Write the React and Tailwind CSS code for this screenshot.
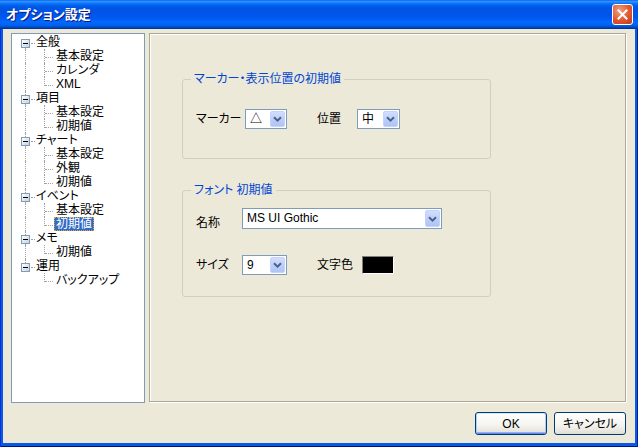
import React from "react";

const tree = [
  { label: "全般", children: ["基本設定", "カレンダ", "XML"] },
  { label: "項目", children: ["基本設定", "初期値"] },
  { label: "チャート", children: ["基本設定", "外観", "初期値"] },
  { label: "イベント", children: ["基本設定", "初期値"], selected: 1 },
  { label: "メモ", children: ["初期値"] },
  { label: "運用", children: ["バックアップ"] },
];

const dot = "absolute border-dotted border-[#a0a0a0]";

function Chevron() {
  return (
    <span className="flex h-full w-[15px] items-center justify-center rounded-[2px] border border-[#c3d3fd] bg-[linear-gradient(to_bottom,#d2defd,#b9cdf9_60%,#aec4f6)]">
      <svg width="9" height="6" viewBox="0 0 9 6">
        <path d="M1 1.2 L4.5 4.6 L8 1.2" fill="none" stroke="#4d6185" strokeWidth="2" />
      </svg>
    </span>
  );
}

function Combo({ value, size }) {
  return (
    <div className={`flex border border-[#7f9db9] bg-white p-[1px] ${size}`}>
      <span className="flex-1 pl-[3px] text-[12px] leading-[16px] text-black">{value}</span>
      <Chevron />
    </div>
  );
}

function Group({ title, size, children }) {
  return (
    <div className={`relative rounded-[3px] border border-[#d0d0bf] ${size}`}>
      <span className="absolute -top-[8px] left-[8px] bg-[#ece9d8] px-[3px] text-[12px] leading-[14px] text-[#0046d5]">
        {title}
      </span>
      {children}
    </div>
  );
}

function TreeRows() {
  const rows = [];
  tree.forEach((node, ri) => {
    const firstRoot = ri === 0;
    const lastRoot = ri === tree.length - 1;
    rows.push(
      <div key={`r${ri}`} className="relative flex h-[14px] items-center pl-[22px]">
        {!firstRoot && <span className={`${dot} left-[13px] top-0 h-[4px] border-l`} />}
        {!lastRoot && <span className={`${dot} left-[13px] top-[13px] h-[1px] border-l`} />}
        <span className="absolute left-[9px] top-[4px] flex h-[9px] w-[9px] items-center justify-center border border-[#7f9db9] bg-[linear-gradient(135deg,#ffffff,#c8d0dc)]">
          <span className="h-[1px] w-[5px] bg-black" />
        </span>
        <span className={`${dot} left-[19px] top-[8px] w-[4px] border-t`} />
        <span className="border border-transparent px-[1px] text-[12px] leading-[12px] text-black">{node.label}</span>
      </div>
    );
    node.children.forEach((c, ci) => {
      const lastChild = ci === node.children.length - 1;
      const sel = node.selected === ci;
      rows.push(
        <div key={`c${ri}-${ci}`} className="relative flex h-[14px] items-center pl-[42px]">
          {!lastRoot && <span className={`${dot} left-[13px] top-0 h-[14px] border-l`} />}
          <span className={`${dot} left-[32px] top-0 border-l ${lastChild ? "h-[9px]" : "h-[14px]"}`} />
          <span className={`${dot} left-[33px] top-[8px] w-[8px] border-t`} />
          <span
            className={
              sel
                ? "border border-dotted border-[#d9a441] bg-[#316ac5] px-[1px] text-[12px] leading-[12px] text-white"
                : "border border-transparent px-[1px] text-[12px] leading-[12px] text-black"
            }
          >
            {c}
          </span>
        </div>
      );
    });
  });
  return rows;
}

function Button({ label, primary }) {
  return (
    <button
      className={`flex h-[23px] w-[72px] items-center justify-center rounded-[3px] border border-[#003c74] bg-[linear-gradient(to_bottom,#ffffff,#f3f3ef_60%,#e2ded4)] text-[12px] text-black ${
        primary ? "shadow-[inset_0_1px_0_#cee7ff,inset_1px_0_0_#aecdf6,inset_-1px_0_0_#aecdf6,inset_0_-1px_0_#6982ee,inset_0_-2px_0_#8cb4f2]" : ""
      }`}
    >
      {label}
    </button>
  );
}

export default function App() {
  return (
    <div className="flex h-[447px] w-[638px] flex-col bg-[#0a5ae6] font-['Liberation_Sans','Noto_Sans_CJK_JP',sans-serif] [font-feature-settings:'palt'] shadow-[inset_1px_0_0_#0831d9,inset_-1px_0_0_#001ea0,inset_0_-1px_0_#001380]">
      {/* title bar */}
      <div className="flex h-[29px] shrink-0 items-center justify-between bg-[linear-gradient(to_bottom,#0058ee_0%,#3593ff_4%,#288eff_7%,#127dff_10%,#036ffc_14%,#0262ee_18%,#0057e5_24%,#0054e3_30%,#0055eb_56%,#005bf5_66%,#026afe_76%,#0062ef_86%,#0052d6_92%,#0040ab_96%,#003092_100%)] pl-[6px] pr-[5px]">
        <span className="text-[13px] font-bold text-white [text-shadow:1px_1px_0_#0a1883]">オプション設定</span>
        <span className="flex h-[21px] w-[21px] items-center justify-center rounded-[3px] border border-white bg-[radial-gradient(circle_at_35%_30%,#f0a080,#e0562e_55%,#c2381a)]">
          <svg width="11" height="11" viewBox="0 0 11 11">
            <path d="M1.5 1.5 L9.5 9.5 M9.5 1.5 L1.5 9.5" stroke="white" strokeWidth="2" strokeLinecap="square" />
          </svg>
        </span>
      </div>

      {/* body */}
      <div className="mx-[3px] mb-[4px] flex flex-1 flex-col bg-[#ece9d8] pl-[8px] pr-[9px] pt-[4px]">
        <div className="flex h-[370px] gap-[4px]">
          <div className="w-[134px] border border-[#7f9db9] bg-white pt-[1px]">
            <TreeRows />
          </div>
          <div className="h-[369px] w-[477px] border border-[#aca899] pl-[32px] pt-[45px] shadow-[inset_1px_1px_0_#fff,1px_1px_0_#fff]">
            <Group title="マーカー・表示位置の初期値" size="w-[309px] h-[80px]">
              <div className="mt-[29px] flex h-[20px] items-center pl-[13px]">
                <span className="w-[49px] text-[12px] text-black">マーカー</span>
                <Combo value="△" size="w-[42px] h-[20px]" />
                <span className="ml-[30px] w-[40px] text-[12px] text-black">位置</span>
                <Combo value="中" size="w-[43px] h-[20px]" />
              </div>
            </Group>
            <div className="h-[31px]" />
            <Group title="フォント 初期値" size="w-[309px] h-[107px]">
              <div className="mt-[17px] flex items-start pl-[13px]">
                <span className="w-[46px] pt-[8px] text-[12px] leading-[14px] text-black">名称</span>
                <Combo value="MS UI Gothic" size="w-[200px] h-[21px]" />
              </div>
              <div className="mt-[25px] flex h-[20px] items-center pl-[13px]">
                <span className="w-[46px] text-[12px] text-black">サイズ</span>
                <Combo value="9" size="w-[45px] h-[20px]" />
                <span className="ml-[30px] w-[45px] text-[12px] text-black">文字色</span>
                <span className="h-[18px] w-[32px] border border-b-white border-l-[#808080] border-r-white border-t-[#808080] bg-black" />
              </div>
            </Group>
          </div>
        </div>
        <div className="mt-[9px] flex justify-end gap-[7px]">
          <Button label="OK" primary />
          <Button label="キャンセル" />
        </div>
      </div>
    </div>
  );
}
